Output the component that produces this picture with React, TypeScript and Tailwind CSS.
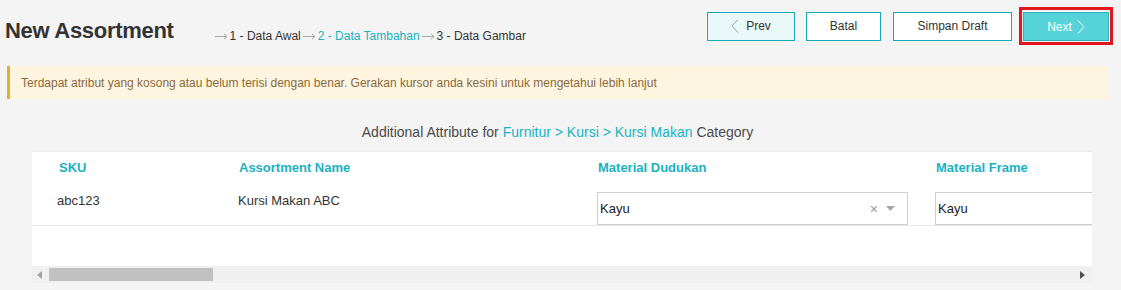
const btnBase = 'h-[29px] border border-[#17aab5] text-[12px] text-[#333] flex items-center justify-center';

function Arrow() {
  return (
    <svg width="13" height="7" viewBox="0 0 13 7" className="mr-[2px]">
      <path d="M0 3.5h12M9 0.8l3 2.7-3 2.7" stroke="#a5a5a5" strokeWidth="1" fill="none" />
    </svg>
  );
}

function Chevron({ dir, color }: { dir: 'left' | 'right'; color: string }) {
  return (
    <svg width="8" height="14" viewBox="0 0 8 14">
      <polyline
        points={dir === 'left' ? '7,0.5 1,7 7,13.5' : '1,0.5 7,7 1,13.5'}
        stroke={color}
        strokeWidth="1"
        fill="none"
      />
    </svg>
  );
}

function Step({ label, active }: { label: string; active?: boolean }) {
  return (
    <span className="flex items-center">
      <Arrow />
      <span className={active ? 'text-[#17b3be]' : 'text-[#333]'}>{label}</span>
    </span>
  );
}

function SelectBox({ value, clear, width }: { value: string; clear?: boolean; width: string }) {
  return (
    <div className={`h-[33px] border border-[#cfcfcf] bg-white flex items-center pl-[2px] pr-[12px] ${width}`}>
      <span className="text-[13px] text-[#222] flex-1">{value}</span>
      {clear && (
        <span className="flex items-center gap-[8px] text-[#9a9a9a]">
          <span className="text-[14px] leading-none">×</span>
          <svg width="9" height="5" viewBox="0 0 9 5"><path d="M0 0h9L4.5 5z" fill="#a8a8a8" /></svg>
        </span>
      )}
    </div>
  );
}

export default function App() {
  return (
    <div className="w-[1121px] h-[290px] bg-[#f4f4f4] font-['Liberation_Sans',Arial,sans-serif] overflow-hidden">
      <div className="flex items-start h-[66px] pl-[5px] pr-[8px]">
        <h1 className="mt-[18px] text-[22px] leading-[26px] font-bold text-[#333] tracking-[-0.3px]">New Assortment</h1>
        <div className="mt-[28px] flex items-center gap-[2px] text-[12px] leading-[16px] ml-[41px]">
          <Step label="1 - Data Awal" />
          <Step label="2 - Data Tambahan" active />
          <Step label="3 - Data Gambar" />
        </div>
        <div className="ml-auto mt-[7px] flex items-center">
          <button className={`${btnBase} w-[88px] bg-[#e9f9fa] gap-[7px]`}>
            <Chevron dir="left" color="#9a9a9a" />
            Prev
          </button>
          <button className={`${btnBase} w-[75px] bg-white ml-[11px]`}>Batal</button>
          <button className={`${btnBase} w-[119px] bg-white ml-[12px]`}>Simpan Draft</button>
          <div className="ml-[7px] border-[3px] border-[#e3161f] pt-[2px] pb-[1px] px-[1px]">
            <button className={`${btnBase} w-[86px] bg-[#56d3d9] text-white gap-[5px] border-[#29b3bb]`}>
              Next
              <Chevron dir="right" color="#ffffff" />
            </button>
          </div>
        </div>
      </div>

      <div className="ml-[7px] mr-[14px] h-[33px] bg-[#fef5e1] border-l-[3px] border-[#e9ac2f] flex items-center pl-[11px]">
        <span className="text-[12px] text-[#8c6a3a]">
          Terdapat atribut yang kosong atau belum terisi dengan benar. Gerakan kursor anda kesini untuk mengetahui lebih lanjut
        </span>
      </div>

      <div className="text-center text-[14px] text-[#4a4a4a] mt-[24px] leading-[18px] pr-[6px]">
        Additional Attribute for <span className="text-[#17b3be]">Furnitur &gt; Kursi &gt; Kursi Makan</span> Category
      </div>

      <div className="mt-[10px] ml-[32px] w-[1060px] bg-white border-t border-[#ececec] overflow-hidden">
        <div className="grid grid-cols-[181px_359px_338px_200px] pl-[25px] h-[31px] items-center text-[13px] font-bold text-[#1ab2bf]">
          <span className="pl-[2px]">SKU</span>
          <span className="pl-[1px]">Assortment Name</span>
          <span className="pl-[1px]">Material Dudukan</span>
          <span className="pl-[1px]">Material Frame</span>
        </div>
        <div className="grid grid-cols-[181px_359px_338px_200px] pl-[25px] pt-[9px] items-start border-b border-[#e6e6e6] text-[13px] text-[#333]">
          <span className="leading-[18px]">abc123</span>
          <span className="leading-[18px]">Kursi Makan ABC</span>
          <SelectBox value="Kayu" clear width="w-[311px]" />
          <SelectBox value="Kayu" width="w-[200px]" />
        </div>
        <div className="h-[40px]" />
        <div className="h-[17px] bg-[#f0f0f0] flex items-center pl-[5px] pr-[6px]">
          <svg width="6" height="8" viewBox="0 0 6 8"><path d="M5 0v8L0 4z" fill="#a3a3a3" /></svg>
          <div className="ml-[6px] w-[164px] h-[13px] bg-[#c1c1c1]" />
          <div className="flex-1" />
          <svg width="6" height="8" viewBox="0 0 6 8"><path d="M0 0v8l5-4z" fill="#505050" /></svg>
        </div>
      </div>
    </div>
  );
}
